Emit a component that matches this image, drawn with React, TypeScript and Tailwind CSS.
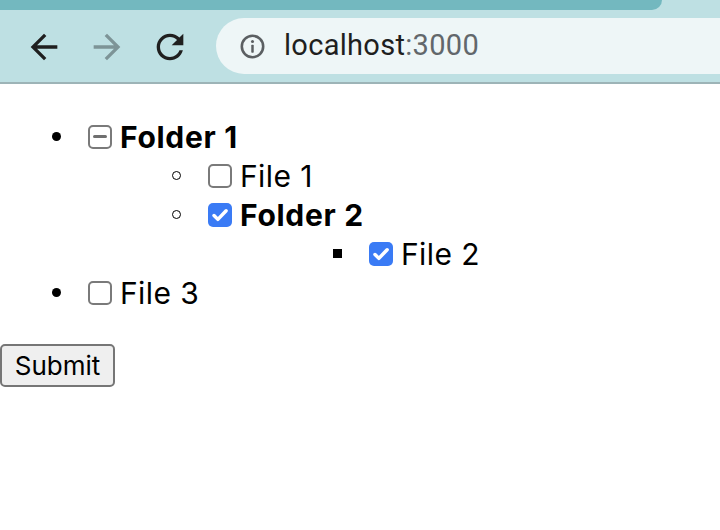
import React from 'react';

type Bullet = 'disc' | 'circle' | 'square';
type Check = 'none' | 'checked' | 'mixed';

const BulletMark: React.FC<{ kind: Bullet }> = ({ kind }) => {
  if (kind === 'disc') return <span className="block w-[9px] h-[9px] rounded-full bg-black" />;
  if (kind === 'circle') return <span className="block w-[9px] h-[9px] rounded-full border border-black" />;
  return <span className="block w-[9px] h-[9px] bg-black" />;
};

const Box: React.FC<{ state: Check }> = ({ state }) => {
  if (state === 'checked') {
    return (
      <span className="flex items-center justify-center w-[24px] h-[24px] rounded-[5px] bg-[#3a7bf5]">
        <svg width="20" height="20" viewBox="0 0 16 16" fill="none">
          <path d="M3.2 8.4l3.1 3.1L12.9 4.6" stroke="white" strokeWidth="2.8" strokeLinecap="round" strokeLinejoin="round" />
        </svg>
      </span>
    );
  }
  return (
    <span className="flex items-center justify-center w-[24px] h-[24px] rounded-[5px] border-2 border-[#7a7a7a] bg-white">
      {state === 'mixed' && <span className="block w-[14px] h-[3px] rounded-sm bg-[#6f6f6f]" />}
    </span>
  );
};

const Row: React.FC<{ indent: string; bullet: Bullet; state: Check; label: string; bold?: boolean }> = ({
  indent,
  bullet,
  state,
  label,
  bold,
}) => (
  <li className={`flex items-center h-[39px] ${indent}`}>
    <span className="w-[36px] flex items-center">
      <BulletMark kind={bullet} />
    </span>
    <Box state={state} />
    <span
      className={`ml-[8px] text-[30px] leading-none text-black ${
        bold ? 'font-bold tracking-[0.7px]' : 'tracking-[0.4px]'
      }`}
    >
      {label}
    </span>
  </li>
);

const App: React.FC = () => {
  return (
    <div className="w-[720px] h-[530px] bg-white overflow-hidden font-['Inter',sans-serif]">
      {/* browser chrome */}
      <div className="bg-[#bee0e3] h-[84px] border-b-2 border-[#9db4b7] relative">
        <div className="absolute left-0 top-0 w-[662px] h-[10px] bg-[#73b8bf] rounded-br-[12px]" />
        <div className="flex items-center h-full pt-[10px]">
          <div className="flex items-center gap-[23px] pl-[24px] pr-[26px] pt-[2px]">
            <svg width="40" height="40" viewBox="0 0 24 24" fill="#1f1f1f">
              <path d="M20 11H7.83l5.59-5.59L12 4l-8 8 8 8 1.41-1.41L7.83 13H20v-2z" />
            </svg>
            <svg width="40" height="40" viewBox="0 0 24 24" fill="#7d9497">
              <path d="M4 11h12.17l-5.59-5.59L12 4l8 8-8 8-1.41-1.41L16.17 13H4v-2z" />
            </svg>
            <svg width="40" height="40" viewBox="0 0 24 24" fill="#1f1f1f">
              <path d="M17.65 6.35C16.2 4.9 14.21 4 12 4c-4.42 0-7.99 3.58-7.99 8s3.57 8 7.99 8c3.73 0 6.84-2.55 7.730-6h-2.08c-.82 2.33-3.04 4-5.65 4-3.31 0-6-2.69-6-6s2.690-6 6-6c1.66 0 3.14.69 4.22 1.78L13 11h7V4l-2.35 2.35z" />
            </svg>
          </div>
          <div className="flex-1 flex items-center h-[56px] rounded-l-full bg-[#eef6f7] pl-[23px]">
            <svg width="27" height="27" viewBox="0 0 24 24" fill="none">
              <circle cx="12" cy="12" r="9.5" stroke="#5b5f62" strokeWidth="2.3" />
              <rect x="10.9" y="10.5" width="2.2" height="7" rx="0.6" fill="#5b5f62" />
              <circle cx="12" cy="7.6" r="1.35" fill="#5b5f62" />
            </svg>
            <span className="ml-[18px] text-[29px] font-['Roboto',sans-serif] tracking-[0.3px]">
              <span className="text-[#1f1f1f]">localhost</span>
              <span className="text-[#62676b]">:3000</span>
            </span>
          </div>
        </div>
      </div>

      {/* tree */}
      <ul className="pt-[33px] pl-[52px]">
        <Row indent="" bullet="disc" state="mixed" label="Folder 1" bold />
        <Row indent="ml-[120px]" bullet="circle" state="none" label="File 1" />
        <Row indent="ml-[120px]" bullet="circle" state="checked" label="Folder 2" bold />
        <Row indent="ml-[281px]" bullet="square" state="checked" label="File 2" />
        <Row indent="" bullet="disc" state="none" label="File 3" />
      </ul>

      <div className="mt-[32px]">
        <button className="h-[43px] w-[115px] rounded-[5px] border-2 border-[#767676] bg-[#efefef] text-[26px] text-black font-['Inter',sans-serif] leading-none">
          Submit
        </button>
      </div>
    </div>
  );
};

export default App;
